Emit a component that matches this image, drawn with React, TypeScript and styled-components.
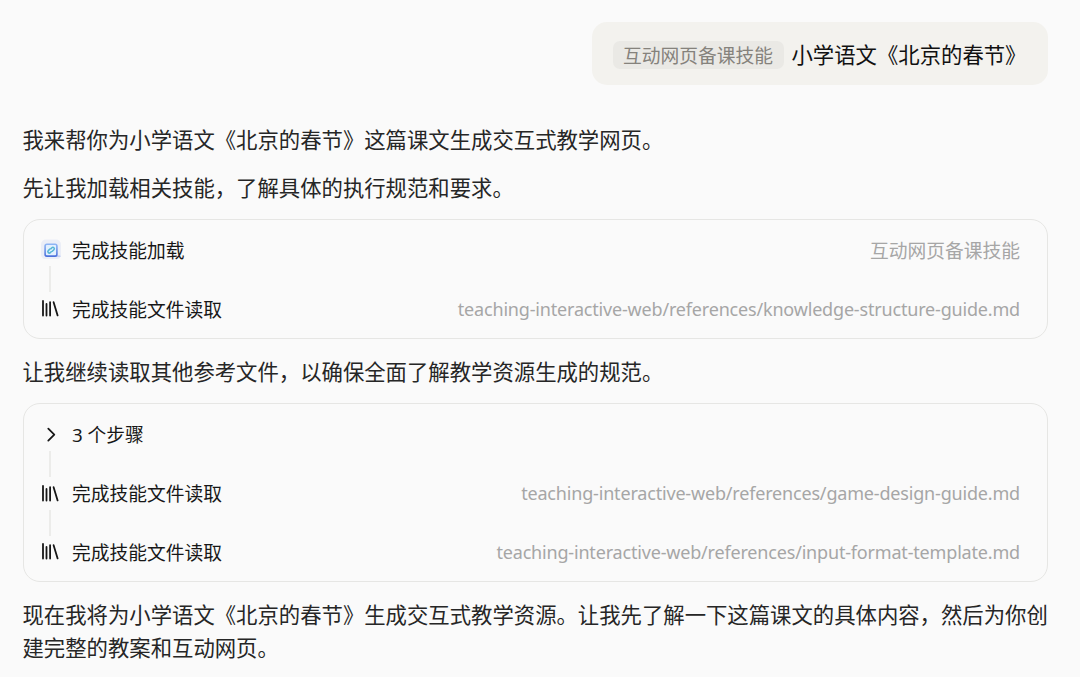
import React from 'react'
import styled, { createGlobalStyle } from 'styled-components';

const GlobalStyle = createGlobalStyle`
  body {
    margin: 0;
    background: #fafafa;
    font-family: "Noto Sans", "Noto Sans CJK SC", sans-serif;
  }
`;

const Page = styled.main`
  display: flex;
  flex-direction: column;
  box-sizing: border-box;
  width: 1080px;
  height: 677px;
  padding: 22px 32px 0 22.5px;
  overflow: hidden;

  & > * {
    flex-shrink: 0;
  }
`;

const Bubble = styled.div`
  display: flex;
  align-items: center;
  align-self: flex-end;
  box-sizing: border-box;
  height: 63px;
  width: 456px;
  margin: 0 0 37.5px;
  padding: 2px 20px 0 20.5px;
  gap: 8px;
  border-radius: 15px;
  background: #f3f2ee;
`;

const SkillTag = styled.span`
  flex: none;
  padding: 1px 10.5px 0;
  border-radius: 7px;
  background: #eae9e5;
  color: #85827c;
  font-size: 18.75px;
  line-height: 27px;
`;

const UserText = styled.span`
  color: #111;
  font-size: 21.36px;
  line-height: 32px;
  white-space: nowrap;
`;

const Paragraph = styled.p`
  width: 1027px;
  margin: 0 0 15.9px;
  color: #262626;
  font-family: "Noto Sans CJK SC", sans-serif;
  font-size: 21.36px;
  line-height: 32.4px;
`;

const Card = styled.section`
  box-sizing: border-box;
  width: 1025px;
  margin-bottom: 16.5px;
  border: 1px solid #e6e6e4;
  border-radius: 17px;
`;

const Step = styled.div`
  display: flex;
  align-items: center;
  height: 58.8px;
  padding: 0 26.5px 0 17px;
`;

/* the rail holds the icon and the thin line down to the next step */
const Rail = styled.div<{ $line?: boolean }>`
  position: relative;
  display: flex;
  flex: none;
  width: 20px;
  height: 20px;
  margin-right: 11.5px;

  &::after {
    content: '';
    display: ${({ $line }) => ($line ? 'block' : 'none')};
    position: absolute;
    left: 8.5px;
    top: 27px;
    width: 1.5px;
    height: 26px;
    background: #ececea;
  }
`;

const StepTitle = styled.span`
  padding-top: 3px;
  color: #171717;
  font-size: 18.75px;
  line-height: 28px;
`;

const StepDetail = styled.span`
  margin-left: auto;
  padding-top: 1px;
  color: #a6a6a6;
  font-size: 18px;
  line-height: 28px;
  white-space: nowrap;
  letter-spacing: -0.18px;
`;

const SkillName = styled(StepDetail)`
  padding-top: 3px;
  font-size: 18.75px;
  letter-spacing: 0;
`;

const SkillIcon = () => (
  <svg width="20" height="20" viewBox="0 0 20 20" fill="none">
    <defs>
      <linearGradient id="frame" x1="0" y1="0" x2="0" y2="1">
        <stop offset="0" stopColor="#8fb5f5" />
        <stop offset="1" stopColor="#4d72dc" />
      </linearGradient>
    </defs>
    <rect y="0.5" width="20" height="20" rx="5" fill="#ebeef7" />
    <path d="M5 17.2h14" stroke="#b5c5f1" strokeWidth="1.3" strokeLinecap="round" />
    <rect x="4.1" y="5.3" width="11.8" height="11.8" rx="1.8" fill="#e2f0ff" stroke="url(#frame)" strokeWidth="1.6" />
    <path d="M10 9.6l.9-.9a1.4 1.4 0 0 1 2 2l-1.6 1.6M10.2 12.7l-.9.9a1.4 1.4 0 0 1-2-2l1.6-1.6" stroke="#55b5d5" strokeWidth="1.5" strokeLinecap="round" />
  </svg>
);

const LibraryIcon = () => (
  <svg width="20" height="20" viewBox="0 0 20 20" fill="none" stroke="#171717" strokeWidth="1.8" strokeLinecap="round">
    <path d="M2 3v14.6M5.5 6v11.6M9.1 4.2v13.4M12.6 4.2l4 13.2" />
  </svg>
);

const ChevronIcon = () => (
  <svg width="20" height="20" viewBox="0 0 20 20" fill="none" stroke="#171717" strokeWidth="1.8" strokeLinecap="round" strokeLinejoin="round">
    <path d="M7.3 4.6l6 6-6 6" />
  </svg>
);

type FileStepProps = {
  file: string;
  line?: boolean;
};

const FileStep = ({ file, line }: FileStepProps) => (
  <Step>
    <Rail $line={line}><LibraryIcon /></Rail>
    <StepTitle>完成技能文件读取</StepTitle>
    <StepDetail>{file}</StepDetail>
  </Step>
);

const App = () => {
  return (
    <>
      <GlobalStyle />
      <Page>
        <Bubble>
          <SkillTag>互动网页备课技能</SkillTag>
          <UserText>小学语文《北京的春节》</UserText>
        </Bubble>

        <Paragraph>我来帮你为小学语文《北京的春节》这篇课文生成交互式教学网页。</Paragraph>
        <Paragraph>先让我加载相关技能，了解具体的执行规范和要求。</Paragraph>

        <Card>
          <Step>
            <Rail $line><SkillIcon /></Rail>
            <StepTitle>完成技能加载</StepTitle>
            <SkillName>互动网页备课技能</SkillName>
          </Step>
          <FileStep file="teaching-interactive-web/references/knowledge-structure-guide.md" />
        </Card>

        <Paragraph>让我继续读取其他参考文件，以确保全面了解教学资源生成的规范。</Paragraph>

        <Card>
          <Step>
            <Rail $line><ChevronIcon /></Rail>
            <StepTitle>3 个步骤</StepTitle>
          </Step>
          <FileStep line file="teaching-interactive-web/references/game-design-guide.md" />
          <FileStep file="teaching-interactive-web/references/input-format-template.md" />
        </Card>

        <Paragraph>
          现在我将为小学语文《北京的春节》生成交互式教学资源。让我先了解一下这篇课文的具体内容，然后为你创建完整的教案和互动网页。
        </Paragraph>
      </Page>
    </>
  )
}

export default App
